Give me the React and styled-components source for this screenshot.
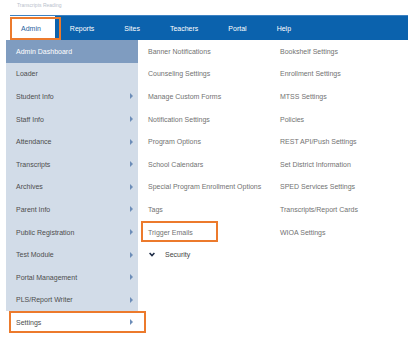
import React from "react";
import styled, { createGlobalStyle } from "styled-components";

const GlobalStyle = createGlobalStyle`
  body {
    margin: 0;
    background: #ffffff;
    font-family: "Liberation Sans", Arial, sans-serif;
  }
`;

const NAV = ["Reports", "Sites", "Teachers", "Portal", "Help"];

const LEFT = [
  { label: "Admin Dashboard", active: true },
  { label: "Loader" },
  { label: "Student Info", arrow: true },
  { label: "Staff Info", arrow: true },
  { label: "Attendance", arrow: true },
  { label: "Transcripts", arrow: true },
  { label: "Archives", arrow: true },
  { label: "Parent Info", arrow: true },
  { label: "Public Registration", arrow: true },
  { label: "Test Module", arrow: true },
  { label: "Portal Management", arrow: true },
  { label: "PLS/Report Writer", arrow: true },
];

const MIDDLE = [
  "Banner Notifications",
  "Counseling Settings",
  "Manage Custom Forms",
  "Notification Settings",
  "Program Options",
  "School Calendars",
  "Special Program Enrollment Options",
  "Tags",
];

const RIGHT = [
  "Bookshelf Settings",
  "Enrollment Settings",
  "MTSS Settings",
  "Policies",
  "REST API/Push Settings",
  "Set District Information",
  "SPED Services Settings",
  "Transcripts/Report Cards",
  "WIOA Settings",
];

const Page = styled.div`
  width: 408px;
  height: 345px;
  overflow: hidden;
`;

const Crumb = styled.div`
  height: 15px;
  padding-left: 17px;
  font-size: 5px;
  line-height: 10px;
  color: #b9c1cc;
`;

const NavBar = styled.nav`
  display: flex;
  height: 25px;
  margin-left: 10px;
  background: #0b62ad;
  border-top: 1px solid #3d82c2;
  box-sizing: border-box;
`;

const NavItem = styled.div`
  position: relative;
  display: flex;
  align-items: center;
  padding: 0 15px;
  font-size: 7px;
  color: #ffffff;
  background: ${(p) => (p.$active ? "#ffffff" : "transparent")};
  ${(p) =>
    p.$active &&
    `
    padding: 0 14px 0 11px;
    color: #1f5fa0;
    &::after {
      content: "";
      position: absolute;
      left: 0;
      right: -6px;
      top: 1px;
      bottom: 0;
      border: 2px solid #ec7a2c;
    }
  `}
`;

const Dropdown = styled.div`
  display: flex;
  margin-left: 6px;
`;

const LeftColumn = styled.div`
  flex: none;
  width: 132px;
`;

const Panel = styled.div`
  background: #d2dce8;
`;

const Row = styled.div`
  position: relative;
  display: flex;
  align-items: center;
  justify-content: space-between;
  height: 22.6px;
  padding: 0 5px 0 10px;
  font-size: 7px;
  color: ${(p) => (p.$active ? "#ffffff" : "#4d4d4d")};
  background: ${(p) => (p.$active ? "#7f9cc0" : "transparent")};
`;

const SettingsRow = styled(Row)`
  background: #ffffff;
  &::after {
    content: "";
    position: absolute;
    left: 3px;
    right: -8px;
    top: 0;
    bottom: 1px;
    border: 2px solid #ec7a2c;
  }
`;

const Arrow = styled.span`
  width: 0;
  height: 0;
  border-left: 3px solid #6d8db8;
  border-top: 3px solid transparent;
  border-bottom: 3px solid transparent;
`;

const Columns = styled.div`
  flex: none;
  display: grid;
  grid-template-columns: 132px 128px;
  padding-left: 10px;
`;

const Column = styled.div`
  display: flex;
  flex-direction: column;
`;

const Link = styled.div`
  position: relative;
  display: flex;
  align-items: center;
  height: 22.6px;
  font-size: 7px;
  white-space: nowrap;
  color: #727272;
  ${(p) =>
    p.$marked &&
    `
    &::after {
      content: "";
      position: absolute;
      left: -7px;
      width: 73px;
      top: 0;
      bottom: 1px;
      border: 2px solid #ec7a2c;
    }
  `}
`;

const Group = styled(Link)`
  gap: 10px;
  color: #444444;
  svg {
    margin-left: 1px;
  }
`;

function Chevron() {
  return (
    <svg width="6" height="5" viewBox="0 0 6 5">
      <path d="M0.6 1 L3 3.6 L5.4 1" fill="none" stroke="#1d2b45" strokeWidth="1.5" />
    </svg>
  );
}

export default function App() {
  return (
    <Page>
      <GlobalStyle />
      <Crumb>Transcripts Reading</Crumb>
      <NavBar>
        <NavItem $active>Admin</NavItem>
        {NAV.map((n) => (
          <NavItem key={n}>{n}</NavItem>
        ))}
      </NavBar>
      <Dropdown>
        <LeftColumn>
          <Panel>
            {LEFT.map((r) => (
              <Row key={r.label} $active={r.active}>
                <span>{r.label}</span>
                {r.arrow && <Arrow />}
              </Row>
            ))}
          </Panel>
          <SettingsRow>
            <span>Settings</span>
            <Arrow />
          </SettingsRow>
        </LeftColumn>
        <Columns>
          <Column>
            {MIDDLE.map((m) => (
              <Link key={m}>{m}</Link>
            ))}
            <Link $marked>Trigger Emails</Link>
            <Group>
              <Chevron />
              <span>Security</span>
            </Group>
          </Column>
          <Column>
            {RIGHT.map((m) => (
              <Link key={m}>{m}</Link>
            ))}
          </Column>
        </Columns>
      </Dropdown>
    </Page>
  );
}
